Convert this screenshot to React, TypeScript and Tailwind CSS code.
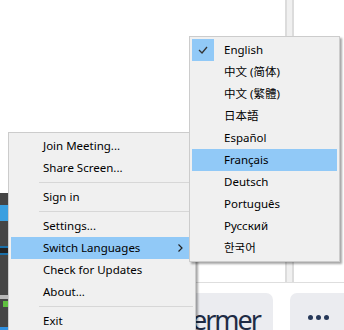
import React from 'react';

const FONT = { fontFamily: '"Noto Sans", "Noto Sans CJK SC", "Noto Sans CJK KR", sans-serif' };

type Item = { label: string; active?: boolean; sub?: boolean } | 'sep';

const TRAY_ITEMS: Item[] = [
    { label: 'Join Meeting...' },
    { label: 'Share Screen...' },
    'sep',
    { label: 'Sign in' },
    'sep',
    { label: 'Settings...' },
    { label: 'Switch Languages', active: true, sub: true },
    { label: 'Check for Updates' },
    { label: 'About...' },
    'sep',
    { label: 'Exit' },
];

const LANGUAGES = [
    'English',
    '中文 (简体)',
    '中文 (繁體)',
    '日本語',
    'Español',
    'Français',
    'Deutsch',
    'Português',
    'Русский',
    '한국어',
];

function MenuRow({ label, active, sub, checked }: { label: string; active?: boolean; sub?: boolean; checked?: boolean }) {
    return (
        <div className={`relative flex h-[22px] items-center ${active ? 'bg-[#91c9f7]' : ''}`}>
            <div className="flex h-[22px] w-[22px] shrink-0 items-center justify-center">
                {checked && (
                    <div className="flex h-[22px] w-[22px] items-center justify-center bg-[#91c9f7]">
                        <svg width="10" height="8" viewBox="0 0 10 8" fill="none" stroke="#333" strokeWidth="1.3">
                            <path d="M1 4l3 3 5-6" />
                        </svg>
                    </div>
                )}
            </div>
            <span className="pl-[10px] text-[11.5px] leading-none text-black whitespace-nowrap">{label}</span>
            {sub && (
                <svg className="absolute right-[10px] top-[7px]" width="5" height="8" viewBox="0 0 5 8" fill="none" stroke="#222" strokeWidth="1.2">
                    <path d="M0.5 0.5l3.5 3.5-3.5 3.5" />
                </svg>
            )}
        </div>
    );
}

export default function App() {
    return (
        <div className="relative flex h-[330px] w-[344px] overflow-hidden bg-white" style={FONT}>
            {/* taskbar edge on the left */}
            <div className="flex w-[8px] shrink-0 flex-col">
                <div className="h-[193px] shrink-0 bg-white" />
                <div className="flex flex-1 flex-col bg-[#454545]">
                    <div className="mt-[12px] h-[16px] w-[8px] bg-[#3a9fe0]" />
                    <div className="mt-[25px] h-[9px] w-[8px] border-y-2 border-[#1a6fa8] bg-[#222]" />
                    <div className="mt-[40px] h-[4px] w-[8px] bg-[#b8b8b8]" />
                    <div className="mt-[2px] ml-[3px] h-[6px] w-[5px] bg-[#5fbf3f]" />
                    <div className="mt-auto h-[3px] w-[8px] bg-[#2f8fdf]" />
                </div>
            </div>

            {/* app window behind */}
            <div className="flex flex-1 flex-col">
                <div className="flex h-[283px] shrink-0 border-b border-[#dedede] pl-[277px]">
                    <div className="h-full w-[9px] border-x-2 border-[#dcdcdc] bg-[#f0f0f0]" />
                </div>
                <div className="flex shrink-0 gap-[17px] pt-[10px]">
                    <div className="ml-[130px] flex w-[135px] justify-end rounded-[7px] bg-[#ebecf0] pr-[13px] pt-[9px]">
                        <span className="text-[27px] leading-[36px] tracking-[-2px] text-[#1e2b45]">Fermer</span>
                    </div>
                    <div className="flex w-[80px] gap-[3px] rounded-[7px] bg-[#ebecf0] pl-[18px] pt-[22px]">
                        <span className="h-[5px] w-[5px] rounded-full bg-[#263859]" />
                        <span className="h-[5px] w-[5px] rounded-full bg-[#263859]" />
                        <span className="h-[5px] w-[5px] rounded-full bg-[#263859]" />
                    </div>
                </div>
            </div>

            {/* tray context menu */}
            <div className="absolute left-[8px] top-[132px] h-[210px] w-[188px] border border-[#cccccc] bg-[#f0f0f0] p-[2px] shadow-[2px_2px_2px_rgba(0,0,0,0.35)]">
                {TRAY_ITEMS.map((it, i) =>
                    it === 'sep' ? (
                        <div key={i} className="flex h-[7px] items-center pl-[28px]">
                            <div className="h-px w-full bg-[#d7d7d7]" />
                        </div>
                    ) : (
                        <MenuRow key={i} label={it.label} active={it.active} sub={it.sub} />
                    ),
                )}
            </div>

            {/* languages submenu */}
            <div className="absolute left-[189px] top-[36px] w-[151px] border border-[#cccccc] bg-[#f0f0f0] p-[2px] shadow-[2px_2px_2px_rgba(0,0,0,0.35)]">
                {LANGUAGES.map((lang) => (
                    <MenuRow key={lang} label={lang} checked={lang === 'English'} active={lang === 'Français'} />
                ))}
            </div>
        </div>
    );
}
